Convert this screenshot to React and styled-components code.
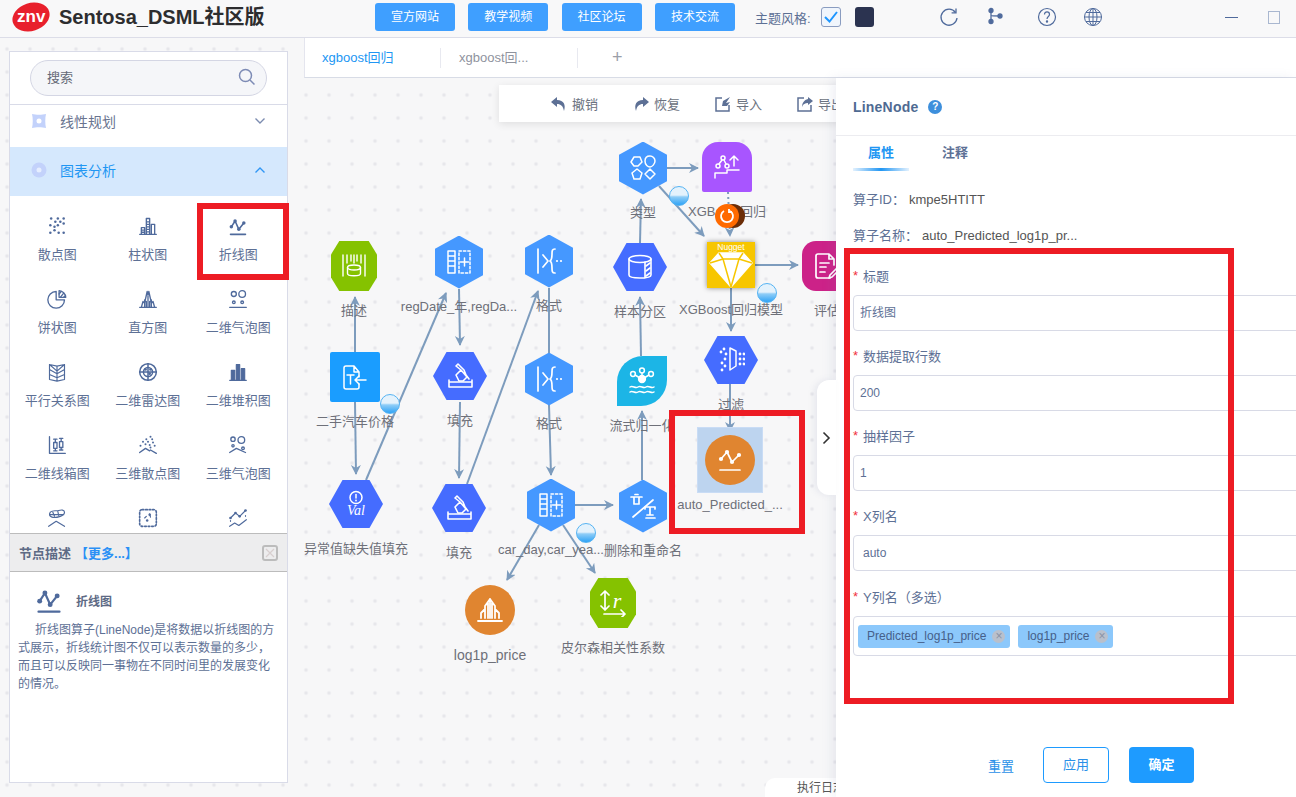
import React from 'react';
import styled, { createGlobalStyle } from 'styled-components';

const FONT = '"Liberation Sans", "Noto Sans CJK SC", sans-serif';
const OX = 304;
const OY = 78;

const GlobalStyle = createGlobalStyle`
    html, body { margin: 0; padding: 0; height: 100%; overflow: hidden; }
    body { font-family: ${FONT}; }
    * { box-sizing: border-box; }
`;

/* ---------- icon helpers ---------- */
const Svg = ({ size = 24, vb = 24, children, w = 1.4 }) => (
    <svg width={size} height={size} viewBox={`0 0 ${vb} ${vb}`} fill="none" stroke="currentColor" strokeWidth={w} strokeLinecap="round" strokeLinejoin="round">
        {children}
    </svg>
);
const Dots = ({ pts, r = 1.2 }) => pts.map(([x, y], i) => <circle key={i} cx={x} cy={y} r={r} fill="currentColor" stroke="none" />);

const LineChart = (p) => (
    <Svg {...p} w={1.9}>
        <path d="M3 22h18" />
        <path d="M4 13l4.500-7 4.500 10 6-7.500" />
        <Dots r={2.1} pts={[[4, 13], [8.5, 6], [13, 16], [19, 8.5]]} />
    </Svg>
);
const Scatter = (p) => <Svg {...p}><Dots r={1.5} pts={[[5, 3], [13, 3], [20, 3], [10, 7], [16, 7], [20, 9], [4, 11], [13, 11], [9, 13], [4, 20], [9, 17], [14, 20], [20, 20]]} /></Svg>;
const Bars = (p) => (
    <Svg {...p} w={1.6}>
        <path d="M2 22h20M4 22v-8h4v8M10 22V3h4v19M16 22V10h4v12M4 17h4M4 19.500h4M10 7h4M10 10h4M10 13h4M10 16h4M10 19h4" />
    </Svg>
);
const Pie = (p) => (
    <Svg {...p} w={1.6}>
        <path d="M11 3a10 10 0 1 0 10 10H11z" />
        <path d="M14.500 2a8.500 8.500 0 0 1 8 8h-8z" />
        <path d="M17 3l-2.500 3M20 5l-4 5M22 8l-2 2" w={1} />
    </Svg>
);
const Histogram = (p) => (
    <Svg {...p} w={1.6}>
        <path d="M2 22h20M4 22l2-7 2 2 1-5 2-9 1 4 1-4 2 9 1 5 2-2 2 7M8 22v-9M12 22V8M16 22v-9M10 22v-7M14 22v-7" />
    </Svg>
);
const Bubble = (p) => (
    <Svg {...p} w={1.6}>
        <path d="M2 22h20" />
        <circle cx="7" cy="6" r="3" />
        <circle cx="17" cy="6" r="4" />
        <circle cx="7" cy="16" r="1.600" />
        <circle cx="17" cy="16" r="1.600" />
    </Svg>
);
const Book = (p) => (
    <Svg {...p}>
        <path d="M3 3l9 2 9-2v18l-9 2-9-2zM12 5v18M3 9l9 5 9-5M3 15l9 4 9-4M3 3l9 8 9-8" />
    </Svg>
);
const Radar = (p) => (
    <Svg {...p} w={1.800}>
        <circle cx="12" cy="12" r="10" />
        <circle cx="12" cy="12" r="5.500" />
        <path d="M12 2v20M2 12h20" />
        <Dots r={1.600} pts={[[9, 9], [15, 9], [14, 14]]} />
    </Svg>
);
const Stacked = (p) => (
    <Svg {...p}>
        <path d="M2 22h20" />
        <path d="M4 10h4v12H4zM10 3h4v19h-4zM16 8h4v14h-4z" fill="currentColor" />
    </Svg>
);
const BoxPlot = (p) => (
    <Svg {...p} w={1.600}>
        <path d="M3 2v20h19M8 5h4M10 5v4M10 16v3M8 19h4M8 9h4v7H8zM15 4h4M17 4v4M17 15v3M15 18h4M15 8h4v7h-4z" />
    </Svg>
);
const Scatter3 = (p) => (
    <Svg {...p} w={1.600}>
        <path d="M2 21l7-5 5 3M15 18l7 4" />
        <Dots r={1.200} pts={[[15, 2], [10, 5], [17, 5], [6, 8], [12, 8], [18, 9], [9, 11], [14, 12], [20, 13], [3, 13], [15, 15]]} />
    </Svg>
);
const Bubble3 = (p) => (
    <Svg {...p} w={1.600}>
        <circle cx="6" cy="5" r="2.600" />
        <circle cx="16" cy="6" r="4" />
        <circle cx="6" cy="13" r="1.400" />
        <circle cx="18" cy="16" r="1.600" />
        <path d="M2 21l8-5 11 5" />
    </Svg>
);
const Cloud = (p) => (
    <Svg {...p}>
        <path d="M4 5c3-3 7-1 10-2s7-1 7 2-2 4-5 5-7 2-10 1-4-3-2-6zM7 5l2 5M13 4l1 5M4 8h16" />
        <path d="M2 22l9-6 10 6" />
    </Svg>
);
const DashedBox = (p) => (
    <Svg {...p}>
        <rect x="2" y="2" width="20" height="20" rx="3" strokeDasharray="2 2.200" strokeWidth="2" />
        <path d="M8 12l2-2M14 7l1 4" />
        <Dots r={1.500} pts={[[14, 8], [11, 15]]} />
    </Svg>
);
const Area = (p) => (
    <Svg {...p}>
        <path d="M3 12l6-6 5 4 7-7" />
        <path d="M2 22l6-4 5 3 9-7" />
        <Dots r={1.600} pts={[[3, 12], [9, 6], [14, 10], [21, 3]]} />
        <path d="M3 15v2M21 9v2" strokeDasharray="1 2" />
    </Svg>
);

/* white glyphs drawn inside canvas nodes */
const W = ({ children, size = 28, vb = 28, w = 1.5 }) => <Svg size={size} vb={vb} w={w}>{children}</Svg>;
const icons = {
    describe: (
        <W w={1.400}>
            <path d="M3 3v21M25 3v21M7 3v8M11 3v6M14 3v8M17 3v6M21 3v8" />
            <ellipse cx="14" cy="15.500" rx="6.500" ry="2.500" />
            <path d="M7.500 15.500v6c0 3 13 3 13 0v-6" />
        </W>
    ),
    table: (
        <W w={1.500}>
            <path d="M18 14V9l-5-6H5a2 2 0 0 0-2 2v19a2 2 0 0 0 2 2h11a2 2 0 0 0 2-2v-3M13 3v6h5" />
            <path d="M6 12h7M9.500 12v9M25 17H14M18 13l-4 4 4 4" />
        </W>
    ),
    columns: (
        <W w={1.500}>
            <path d="M3 3h7v22H3zM3 8h7M3 13h7M3 18h7" />
            <path d="M14 3h11v22H14z" strokeDasharray="2.400 2" />
            <path d="M19.500 10v8M15.500 14h8" />
        </W>
    ),
    format: (
        <W w={1.700}>
            <path d="M3 2v24M8 8l5 6-5 6" />
            <path d="M20 2c-3 0-3 2-3 5s0 6-2 7c2 1 2 4 2 7s0 5 3 5" />
            <Dots r={1.100} pts={[[22, 14], [26, 14]]} />
        </W>
    ),
    fill: (
        <W w={1.600}>
            <path d="M3 20h23v5H3zM3 20v-2M26 20v-2" />
            <path d="M10 13l5-5 6 7-4 4h-4zM10 4l5 4M10 4l2-2 6 6 2 5 3 4" />
        </W>
    ),
    val: (
        <W w={1.500}>
            <circle cx="14" cy="7.500" r="6" />
            <path d="M14 4.500v3.500" />
            <Dots r={0.900} pts={[[14, 10.500]]} />
            <text x="14" y="25" textAnchor="middle" fill="currentColor" stroke="none" fontFamily='"Liberation Serif", serif' fontStyle="italic" fontSize="14">Val</text>
        </W>
    ),
    cylinder: (
        <W w={1.600}>
            <ellipse cx="14" cy="6" rx="11" ry="3.500" />
            <path d="M3 6v16c0 4 22 4 22 0V6M19 9v16" />
            <path d="M20 13l4-3M20 18l4-3M20 23l4-3" />
        </W>
    ),
    types: (
        <W w={1.500}>
            <path d="M5 3h6l2 5-4 4H5L2 8zM21 2a5 5 0 0 1 5 5c0 3-3 6-5 6s-5-2-5-6 2-5 5-5zM8 15l5 4-2 6H5l-2-6zM21 15l5 5-5 5-5-5z" />
        </W>
    ),
    xgb: (
        <W w={1.500}>
            <circle cx="10" cy="5" r="2" />
            <circle cx="5" cy="13" r="2" />
            <circle cx="14" cy="13" r="2" />
            <path d="M9 7l-3 4M11 7l2 4M21 13V3M17 7l4-4 4 4M2 25v-5h12v-3h12" />
        </W>
    ),
    nugget: (
        <svg width="48" height="46" viewBox="0 0 48 46" fill="none" stroke="#fff" strokeWidth="1.500" strokeLinejoin="round">
            <text x="24" y="8" textAnchor="middle" fontSize="8.500" fill="#fff" stroke="none" fontFamily={FONT}>Nugget</text>
            <path d="M12 11h24l9 10-21 24L3 21z" fill="#fff" />
            <path d="M12 11l4 6h16l4-6M3 21l13-4 8 28 8-28 13 4M16 17h16" stroke="#f7c600" />
        </svg>
    ),
    evaluate: (
        <W w={1.700}>
            <path d="M21 13V7l-5-5H5a2 2 0 0 0-2 2v20a2 2 0 0 0 2 2h12M16 2v5h5M7 11h9M7 15h6M7 20h5" />
            <path d="M17 23l8-8 2 2-8 8-3 1z" />
        </W>
    ),
    filter: (
        <W w={1.500}>
            <path d="M13 2l6 3v15l-6 4z" />
            <Dots r={1.400} pts={[[7, 3], [4, 6], [9, 8], [8, 13], [5, 17], [8, 20], [5, 24], [23, 8], [27, 8], [23, 13], [27, 13], [23, 18], [27, 18]]} />
        </W>
    ),
    stream: (
        <W w={1.500}>
            <circle cx="14" cy="12" r="3.400" fill="currentColor" />
            <circle cx="5" cy="7" r="2.400" />
            <circle cx="14" cy="3.500" r="2.400" />
            <circle cx="23" cy="7" r="2.400" />
            <path d="M7 8l5 3M14 6v3M21 8l-5 3M2 20c3-2 5 2 8 0s5 2 8 0 5 2 8 0M2 25c3-2 5 2 8 0s5 2 8 0 5 2 8 0" />
        </W>
    ),
    rename: (
        <W w={1.700}>
            <path d="M2 5h11M5 5v7h5V5M6 2.500h3M4 25L24 8" />
            <path d="M16 15h10M16 15v2M26 15v2M21 15v8M18 23h6M17 26h9" />
        </W>
    ),
    hist: (
        <W w={1.800}>
            <path d="M2 25h24" />
            <path d="M5 22v-5M9 22V10M12 22V7M14 22V3M16 22V7M19 22V10M23 22v-5M5 17l4-4M23 17l-4-4M9 10l5-7 5 7" />
        </W>
    ),
    line: (
        <W w={1.700}>
            <path d="M4 24h20" />
            <path d="M5 13l6-7 5 10 7-7" />
            <Dots r={2.100} pts={[[5, 13], [11, 6], [16, 16], [23, 9]]} />
        </W>
    ),
    pearson: (
        <W w={1.700}>
            <path d="M5 25h21M22 21l4 4-4 4M6 2v19M2 6l4-4 4 4M2 17l4 4 4-4" />
            <text x="18" y="19" textAnchor="middle" fill="currentColor" stroke="none" fontFamily='"Liberation Serif", serif' fontStyle="italic" fontSize="22">r</text>
        </W>
    ),
};

/* ---------- data ---------- */
const chartItems = [
    ['散点图', Scatter], ['柱状图', Bars], ['折线图', LineChart],
    ['饼状图', Pie], ['直方图', Histogram], ['二维气泡图', Bubble],
    ['平行关系图', Book], ['二维雷达图', Radar], ['二维堆积图', Stacked],
    ['二维线箱图', BoxPlot], ['三维散点图', Scatter3], ['三维气泡图', Bubble3],
    ['', Cloud], ['', DashedBox], ['', Area],
];

const nodes = [
    { x: 354, y: 266, shape: 'octagon', color: '#85c200', icon: 'describe', label: '描述' },
    { x: 459, y: 262, shape: 'hex', color: '#4598ff', icon: 'columns', label: 'regDate_年,regDa...' },
    { x: 549, y: 261, shape: 'hex', color: '#4598ff', icon: 'format', label: '格式' },
    { x: 355, y: 377, shape: 'square', color: '#1a9dff', icon: 'table', label: '二手汽车价格' },
    { x: 460, y: 376, shape: 'flat', color: '#456cff', icon: 'fill', label: '填充' },
    { x: 549, y: 379, shape: 'hex', color: '#4598ff', icon: 'format', label: '格式' },
    { x: 356, y: 504, shape: 'flat', color: '#456cff', icon: 'val', label: '异常值缺失值填充' },
    { x: 459, y: 508, shape: 'flat', color: '#456cff', icon: 'fill', label: '填充' },
    { x: 551, y: 505, shape: 'hex', color: '#4598ff', icon: 'columns', label: 'car_day,car_yea...' },
    { x: 490, y: 610, shape: 'circle', color: '#e08530', icon: 'hist', label: 'log1p_price', big: true },
    { x: 613, y: 603, shape: 'octagon', color: '#85c200', icon: 'pearson', label: '皮尔森相关性系数' },
    { x: 643, y: 506, shape: 'hex', color: '#4598ff', icon: 'rename', label: '删除和重命名' },
    { x: 642, y: 381, shape: 'leaf', color: '#1cb5e6', icon: 'stream', label: '流式归一化' },
    { x: 640, y: 267, shape: 'flat', color: '#456cff', icon: 'cylinder', label: '样本分区' },
    { x: 643, y: 168, shape: 'hex', color: '#4598ff', icon: 'types', label: '类型' },
    { x: 727, y: 167, shape: 'top', color: '#a855ff', icon: 'xgb', label: 'XGBoost回归' },
    { x: 731, y: 265, shape: 'nugget', color: '#f7c600', icon: 'nugget', label: 'XGBoost回归模型' },
    { x: 827, y: 266, shape: 'rounded', color: '#cc2288', icon: 'evaluate', label: '评估' },
    { x: 731, y: 360, shape: 'flat', color: '#456cff', icon: 'filter', label: '过滤' },
    { x: 730, y: 460, shape: 'circle', color: '#e08530', icon: 'line', label: 'auto_Predicted_...', selected: true },
];

const edges = [
    [355, 352, 355, 297], [355, 402, 356, 474], [366, 480, 446, 293], [459, 289, 460, 345],
    [460, 402, 459, 478], [467, 484, 538, 291], [549, 288, 549, 353, 1], [549, 405, 551, 475],
    [539, 525, 507, 580], [563, 525, 595, 573], [575, 505, 613, 505], [642, 480, 642, 411],
    [641, 356, 640, 297], [640, 243, 641, 199], [667, 168, 698, 168], [659, 186, 704, 236],
    [755, 265, 798, 265], [731, 288, 731, 331], [730, 384, 730, 431],
];

const bubbles = [[390, 404], [679, 196], [767, 293], [586, 533]];

const fields = [
    ['标题', '折线图'],
    ['数据提取行数', '200'],
    ['抽样因子', '1'],
    ['X列名', 'auto', true],
];

/* ---------- app ---------- */
const App = () => (
    <Page>
        <GlobalStyle />
        <Header>
            <Brand>
                <Logo><LogoText>znv</LogoText></Logo>
                <Title>Sentosa_DSML社区版</Title>
            </Brand>
            <LinkRow>
                {['宣方网站', '教学视频', '社区论坛', '技术交流'].map((t) => <LinkButton key={t}>{t}</LinkButton>)}
            </LinkRow>
            <ThemeRow>
                主题风格:
                <ThemeCheck>
                    <svg width="16" height="14" viewBox="0 0 16 14" fill="none" stroke="#1e96ff" strokeWidth="2"><path d="M2 7l4.500 4.500L14 2" /></svg>
                </ThemeCheck>
                <ThemeDark />
            </ThemeRow>
            <HeaderIcons>
                <HeaderIcon $left={939}>
                    <svg width="20" height="20" viewBox="0 0 20 20" fill="none" stroke="currentColor" strokeWidth="1.300"><path d="M16.500 5.500A8 8 0 1 0 18 11" /><path d="M17 1.500v4.400h-4.400" /></svg>
                </HeaderIcon>
                <HeaderIcon $left={986}>
                    <svg width="18" height="18" viewBox="0 0 18 18" fill="currentColor" stroke="currentColor" strokeWidth="1.300"><circle cx="5" cy="3.500" r="2" /><circle cx="5" cy="14.500" r="2" /><circle cx="14" cy="9" r="2" /><path d="M5 3.500v11M5 8c0 1 2 1 9 1" fill="none" /></svg>
                </HeaderIcon>
                <HeaderIcon $left={1037}>
                    <svg width="20" height="20" viewBox="0 0 20 20" fill="none" stroke="currentColor" strokeWidth="1.200"><circle cx="10" cy="10" r="8.500" /><path d="M7.500 7.500c0-3.500 5-3.500 5 0 0 2-2.500 2-2.500 4.500" /><circle cx="10" cy="14.500" r=".6" fill="currentColor" /></svg>
                </HeaderIcon>
                <HeaderIcon $left={1083}>
                    <svg width="20" height="20" viewBox="0 0 20 20" fill="none" stroke="currentColor" strokeWidth="1"><circle cx="10" cy="10" r="8.500" /><ellipse cx="10" cy="10" rx="4" ry="8.500" /><path d="M10 1.500v17M1.500 10h17M3 5.500h14M3 14.500h14" /></svg>
                </HeaderIcon>
                <MinimizeBar />
                <MaximizeBox />
            </HeaderIcons>
        </Header>
        <Content>
            <SideColumn>
                <Sidebar>
                    <SearchArea>
                        <SearchBox>
                            搜索
                            <svg width="18" height="18" viewBox="0 0 18 18" fill="none" stroke="#7d8bb5" strokeWidth="1.500"><circle cx="7.500" cy="7.500" r="6" /><path d="M12 12l4.500 4.500" /></svg>
                        </SearchBox>
                    </SearchArea>
                    <Accordion>
                        <AccordionIcon>
                            <svg width="16" height="16" viewBox="0 0 16 16"><path d="M1 1c4 1 10 1 14 0-1 4-1 10 0 14-4-1-10-1-14 0 1-4 1-10 0-14z" fill="#c3d2fb" /><circle cx="8" cy="8" r="2.500" fill="#fff" /></svg>
                        </AccordionIcon>
                        线性规划
                        <Chevron><svg width="12" height="8" viewBox="0 0 12 8" fill="none" stroke="#7c8cb0" strokeWidth="1.400"><path d="M1.500 1.500L6 6l4.500-4.500" /></svg></Chevron>
                    </Accordion>
                    <Accordion $active>
                        <AccordionIcon>
                            <svg width="16" height="16" viewBox="0 0 16 16"><circle cx="8" cy="8" r="7.500" fill="#c3d2fb" /><circle cx="8" cy="8" r="2.500" fill="#e6eeff" /></svg>
                        </AccordionIcon>
                        图表分析
                        <Chevron><svg width="12" height="8" viewBox="0 0 12 8" fill="none" stroke="#2f96f5" strokeWidth="1.400"><path d="M1.500 6.500L6 2l4.500 4.500" /></svg></Chevron>
                    </Accordion>
                    <ChartGrid>
                        {chartItems.map(([label, Icon], i) => (
                            <ChartCell key={i}>
                                <IconSlot><Icon size={20} /></IconSlot>
                                <ChartLabel>{label}</ChartLabel>
                            </ChartCell>
                        ))}
                    </ChartGrid>
                    <Description>
                        <DescriptionHead>
                            <DescriptionTitle>节点描述</DescriptionTitle>
                            <MoreLink>【更多...】</MoreLink>
                            <CloseBox>
                                <svg width="10" height="10" viewBox="0 0 10 10" stroke="#d8cfcf" strokeWidth="1.200"><path d="M1 1l8 8M9 1l-8 8" /></svg>
                            </CloseBox>
                        </DescriptionHead>
                        <DescriptionBody>
                            <DescriptionLead>
                                <LeadIcon><LineChart size={28} /></LeadIcon>
                                <LeadName>折线图</LeadName>
                            </DescriptionLead>
                            <DescriptionText>
                                折线图算子(LineNode)是将数据以折线图的方式展示，折线统计图不仅可以表示数量的多少，而且可以反映同一事物在不同时间里的发展变化的情况。
                            </DescriptionText>
                        </DescriptionBody>
                    </Description>
                    <RedBox $left={187} $top={151} $width={92} $height={77} />
                </Sidebar>
            </SideColumn>
            <Main>
                <TabBar>
                    <CanvasTab $active>xgboost回归</CanvasTab>
                    <CanvasTab>xgboost回...</CanvasTab>
                    <AddTab>+</AddTab>
                </TabBar>
                <Canvas>
                    <EdgeLayer width="992" height="719" viewBox={`${OX} ${OY} 992 719`}>
                        <defs>
                            <marker id="arrow" markerWidth="12" markerHeight="12" refX="9" refY="5" orient="auto" markerUnits="userSpaceOnUse">
                                <path d="M0 0L10 5L0 10L3 5z" fill="#7d9cbd" />
                            </marker>
                        </defs>
                        {edges.map(([a, b, c, d, plain], i) => (
                            <line key={i} x1={a} y1={b} x2={c} y2={d} stroke="#7d9cbd" strokeWidth="2" markerEnd={plain ? undefined : 'url(#arrow)'} />
                        ))}
                        <line x1="728" y1="192" x2="730" y2="236" stroke="#7d9cbd" strokeWidth="2" strokeDasharray="2 3" markerEnd="url(#arrow)" />
                    </EdgeLayer>
                    {nodes.map((n) => (
                        <Node key={n.label + n.x} style={{ left: n.x - 70 - OX, top: n.y - 27 - OY }}>
                            <ShapeSlot>
                                {n.selected && <Selection />}
                                <Shape $kind={n.shape} $color={n.color}>{icons[n.icon]}</Shape>
                            </ShapeSlot>
                            <NodeLabel $big={n.big}>{n.label}</NodeLabel>
                        </Node>
                    ))}
                    {bubbles.map(([x, y]) => <WaterBubble key={x} style={{ left: x - 10 - OX, top: y - 10 - OY }} />)}
                    <Spinner>
                        <svg width="16" height="16" viewBox="0 0 16 16" fill="none" stroke="#fff" strokeWidth="1.800"><path d="M11 3a6 6 0 1 1-6 0" /><path d="M10 1v3h3" /></svg>
                    </Spinner>
                    <Toolbar>
                        <ToolItem>
                            <svg width="16" height="16" viewBox="0 0 16 16" fill="#5d7095"><path d="M6 1L0 6l6 5V8c4 0 6 2 7 7 2-6 0-11-7-11z" /></svg>
                            撤销
                        </ToolItem>
                        <ToolItem>
                            <svg width="16" height="16" viewBox="0 0 16 16" fill="#5d7095"><path d="M10 1l6 5-6 5V8C6 8 4 10 3 15 1 9 3 4 10 4z" /></svg>
                            恢复
                        </ToolItem>
                        <ToolItem>
                            <svg width="16" height="16" viewBox="0 0 16 16" fill="none" stroke="#5d7095" strokeWidth="1.500"><path d="M7 2H1v13h13V9" /><path d="M15 1L8 5l-1 5h5l3-4-4 1z" fill="#5d7095" stroke="none" /></svg>
                            导入
                        </ToolItem>
                        <ToolItem>
                            <svg width="16" height="16" viewBox="0 0 16 16" fill="none" stroke="#5d7095" strokeWidth="1.500"><path d="M7 2H1v13h13V9" /><path d="M11 1l5 4-5 4V7C8 7 6 8 5 11c0-4 2-7 6-8z" fill="#5d7095" stroke="none" /></svg>
                            导出
                        </ToolItem>
                    </Toolbar>
                    <RedBox $left={365} $top={332} $width={136} $height={124} />
                    <LogTab>执行日志</LogTab>
                    <Panel>
                        <CollapseHandle>
                            <svg width="9" height="14" viewBox="0 0 9 14" fill="none" stroke="#333" strokeWidth="1.600"><path d="M1.500 1.500L7 7l-5.500 5.500" /></svg>
                        </CollapseHandle>
                        <PanelHead>
                            LineNode
                            <HelpDot>?</HelpDot>
                        </PanelHead>
                        <PanelTabs>
                            <PanelTab $active>属性</PanelTab>
                            <PanelTab>注释</PanelTab>
                        </PanelTabs>
                        <InfoRow>算子ID：<InfoValue>kmpe5HTITT</InfoValue></InfoRow>
                        <InfoRow>算子名称：<InfoValue>auto_Predicted_log1p_pr...</InfoValue></InfoRow>
                        <Form>
                            {fields.map(([label, value, select]) => (
                                <Field key={label}>
                                    <FieldLabel><Star>*</Star>{label}</FieldLabel>
                                    <FieldInput $select={select}>{value}</FieldInput>
                                </Field>
                            ))}
                            <Field>
                                <FieldLabel><Star>*</Star>Y列名（多选）</FieldLabel>
                                <MultiInput>
                                    <Tag>Predicted_log1p_price<TagClose>×</TagClose></Tag>
                                    <Tag>log1p_price<TagClose>×</TagClose></Tag>
                                </MultiInput>
                            </Field>
                        </Form>
                        <RedBox $left={8} $top={170} $width={390} $height={456} />
                        <PanelFooter>
                            <TextButton>重置</TextButton>
                            <OutlineButton>应用</OutlineButton>
                            <SolidButton>确定</SolidButton>
                        </PanelFooter>
                    </Panel>
                </Canvas>
            </Main>
        </Content>
    </Page>
);

/* ---------- styles ---------- */
const Page = styled.div`
    width: 1296px;
    height: 797px;
    overflow: hidden;
    display: flex;
    flex-direction: column;
    background-color: #f7f7f8;
    background-image: radial-gradient(circle, #e7e7eb 1.600px, transparent 2.100px);
    background-size: 23px 23px;
    background-position: -4.500px -8.500px;
`;

const Header = styled.header`
    flex: 0 0 38px;
    position: relative;
    display: flex;
    align-items: flex-start;
    background: #f8f8f9;
    border-bottom: 1px solid #dcdde8;
`;

const Brand = styled.div`
    width: 375px;
    display: flex;
    align-items: center;
    padding: 3px 0 0 12px;
`;

const Logo = styled.div`
    width: 38px;
    height: 28px;
    border-radius: 50%;
    background: #e8202c;
    transform: rotate(-18deg);
    display: flex;
    align-items: center;
    justify-content: center;
`;

const LogoText = styled.span`
    color: #fff;
    font-size: 17px;
    font-weight: 700;
    transform: rotate(18deg);
`;

const Title = styled.div`
    margin-left: 9px;
    font-size: 20px;
    font-weight: 700;
    color: #2d2d2f;
    line-height: 28px;
    white-space: nowrap;
`;

const LinkRow = styled.div`
    display: flex;
    gap: 13.300px;
    padding-top: 3px;
`;

const LinkButton = styled.div`
    width: 80px;
    height: 28px;
    line-height: 28px;
    text-align: center;
    border-radius: 3px;
    background: #3f9fff;
    color: #fff;
    font-size: 12px;
`;

const ThemeRow = styled.div`
    margin-left: 20px;
    height: 34px;
    display: flex;
    align-items: center;
    font-size: 13px;
    color: #5d7095;
    white-space: nowrap;
`;

const ThemeCheck = styled.div`
    width: 20px;
    height: 20px;
    margin-left: 10px;
    border: 1px solid #8a9cc0;
    border-radius: 3px;
    background: #f0f5fc;
    display: flex;
    align-items: center;
    justify-content: center;
`;

const ThemeDark = styled.div`
    width: 19px;
    height: 20px;
    margin-left: 14px;
    border-radius: 3px;
    background: #2b3350;
`;

const HeaderIcons = styled.div`
    flex: 1;
    display: flex;
    align-items: center;
    height: 34px;
    color: #4f6a9c;
`;

const HeaderIcon = styled.div`
    position: absolute;
    left: ${(p) => p.$left}px;
    top: 7px;
    line-height: 0;
`;

const MinimizeBar = styled.div`
    position: absolute;
    left: 1225px;
    top: 17px;
    width: 13px;
    height: 1px;
    background: #4f6a9c;
`;

const MaximizeBox = styled.div`
    position: absolute;
    left: 1268px;
    top: 11px;
    width: 12px;
    height: 13px;
    border: 1px solid #a9b7d0;
`;

const Content = styled.div`
    flex: 1;
    display: flex;
    min-height: 0;
`;

const SideColumn = styled.div`
    flex: 0 0 304px;
    padding: 13px 16px 14px 9px;
`;

const Sidebar = styled.aside`
    position: relative;
    height: 100%;
    display: flex;
    flex-direction: column;
    background: #fff;
    border: 1px solid #d9dbe8;
`;

const SearchArea = styled.div`
    flex: 0 0 53px;
    padding: 8px 20px 0;
    border-bottom: 1px solid #d9dbe8;
`;

const SearchBox = styled.div`
    height: 36px;
    border: 1px solid #d4d6e4;
    border-radius: 18px;
    background: #f5f6f9;
    padding: 0 10px 3px 16px;
    display: flex;
    align-items: center;
    justify-content: space-between;
    font-size: 13px;
    color: #666a77;
`;

const Accordion = styled.div`
    flex: 0 0 ${(p) => (p.$active ? 49 : 42)}px;
    display: flex;
    align-items: center;
    padding: 0 21px ${(p) => (p.$active ? 4 : 10)}px;
    font-size: 14px;
    color: ${(p) => (p.$active ? '#2196f3' : '#69748f')};
    background: ${(p) => (p.$active ? '#d5e8fd' : '#fff')};
`;

const AccordionIcon = styled.span`
    width: 29px;
    line-height: 0;
`;

const Chevron = styled.span`
    margin-left: auto;
    line-height: 0;
`;

const ChartGrid = styled.div`
    flex: 1;
    min-height: 0;
    overflow: hidden;
    display: grid;
    grid-template-columns: repeat(3, 90.500px);
    grid-auto-rows: 73px;
    padding: 20px 0 0 2px;
`;

const ChartCell = styled.div`
    display: flex;
    flex-direction: column;
    align-items: center;
    color: #4f6a9c;
`;

const IconSlot = styled.div`
    height: 22px;
    line-height: 0;
`;

const ChartLabel = styled.div`
    margin-top: 8px;
    line-height: 18px;
    font-size: 13px;
    color: #5d7095;
    white-space: nowrap;
`;

const Description = styled.section`
    flex: 0 0 249px;
    display: flex;
    flex-direction: column;
    background: #fff;
`;

const DescriptionHead = styled.div`
    flex: 0 0 39px;
    display: flex;
    align-items: center;
    padding: 0 9px;
    background: #ededee;
    border-top: 1px solid #bcbcbc;
    border-bottom: 1px solid #bcbcbc;
`;

const DescriptionTitle = styled.span`
    font-size: 13px;
    font-weight: 700;
    color: #5d6a85;
`;

const MoreLink = styled.span`
    margin-left: 4px;
    font-size: 13px;
    font-weight: 700;
    color: #2a90f5;
`;

const CloseBox = styled.span`
    margin-left: auto;
    width: 16px;
    height: 16px;
    border: 2px solid #bcbcbc;
    border-radius: 3px;
    display: flex;
    align-items: center;
    justify-content: center;
`;

const DescriptionBody = styled.div`
    padding: 14px 9px 0 8px;
`;

const DescriptionLead = styled.div`
    display: flex;
    align-items: center;
    padding-left: 17px;
`;

const LeadIcon = styled.span`
    line-height: 0;
    color: #4f6a9c;
`;

const LeadName = styled.span`
    margin-left: 13px;
    font-size: 12px;
    font-weight: 700;
    color: #5d6a85;
`;

const DescriptionText = styled.p`
    margin: 7px 0 0;
    font-size: 12px;
    line-height: 18px;
    text-indent: 17px;
    color: #5d7095;
`;

const RedBox = styled.div`
    position: absolute;
    left: ${(p) => p.$left}px;
    top: ${(p) => p.$top}px;
    width: ${(p) => p.$width}px;
    height: ${(p) => p.$height}px;
    border: 6px solid #ed1c24;
    pointer-events: none;
    z-index: 4;
`;

const Main = styled.main`
    flex: 1;
    display: flex;
    flex-direction: column;
    min-width: 0;
`;

const TabBar = styled.div`
    flex: 0 0 40px;
    display: flex;
    align-items: center;
    background: #fff;
    border-left: 1px solid #e4e5ee;
    border-bottom: 1px solid #d8dce6;
`;

const CanvasTab = styled.div`
    width: ${(p) => (p.$active ? 136 : 137)}px;
    height: 20px;
    line-height: 20px;
    padding-left: ${(p) => (p.$active ? 17 : 18)}px;
    font-size: 13px;
    color: ${(p) => (p.$active ? '#2196f3' : '#8f939e')};
    border-right: 1px solid #e8e9f0;
`;

const AddTab = styled.div`
    margin-left: 34px;
    font-size: 18px;
    color: #9a9ea8;
`;

const Canvas = styled.div`
    flex: 1;
    position: relative;
`;

const EdgeLayer = styled.svg`
    position: absolute;
    left: 0;
    top: 0;
`;

const Node = styled.div`
    position: absolute;
    width: 140px;
    display: flex;
    flex-direction: column;
    align-items: center;
`;

const ShapeSlot = styled.div`
    position: relative;
    height: 54px;
    width: 100%;
    display: flex;
    align-items: center;
    justify-content: center;
`;

const clips = {
    hex: 'polygon(50% 0, 100% 25%, 100% 75%, 50% 100%, 0 75%, 0 25%)',
    flat: 'polygon(25% 0, 75% 0, 100% 50%, 75% 100%, 25% 100%, 0 50%)',
    octagon: 'polygon(18% 0, 82% 0, 100% 27%, 100% 73%, 82% 100%, 18% 100%, 0 73%, 0 27%)',
};

const sizes = {
    hex: [48, 53],
    flat: [54, 48],
    octagon: [46, 50],
    nugget: [48, 46],
};

const radii = {
    circle: '50%',
    square: '2px',
    top: '16px 16px 2px 2px',
    rounded: '14px 2px 2px 14px',
    leaf: '26px 0 26px 0',
    nugget: '0',
};

const Shape = styled.div`
    position: relative;
    width: ${(p) => (sizes[p.$kind] || [50, 50])[0]}px;
    height: ${(p) => (sizes[p.$kind] || [50, 50])[1]}px;
    background: ${(p) => p.$color};
    color: #fff;
    clip-path: ${(p) => clips[p.$kind] || 'none'};
    border-radius: ${(p) => radii[p.$kind] || '0'};
    box-shadow: ${(p) => (p.$kind === 'nugget' ? '0 0 5px rgba(0, 0, 0, 0.45)' : 'none')};
    display: flex;
    align-items: center;
    justify-content: center;
    overflow: ${(p) => (p.$kind === 'nugget' ? 'hidden' : 'visible')};

    svg {
        display: block;
    }
`;

const Selection = styled.div`
    position: absolute;
    left: 37px;
    top: -6px;
    width: 66px;
    height: 66px;
    background: #bdd4ef;
    border: 1px solid #c9dcf5;
`;

const NodeLabel = styled.div`
    margin-top: 8px;
    line-height: 20px;
    font-size: ${(p) => (p.$big ? 14 : 13)}px;
    color: #6e7079;
    white-space: nowrap;
`;

const WaterBubble = styled.div`
    position: absolute;
    width: 20px;
    height: 20px;
    border-radius: 50%;
    border: 1px solid #55b3f3;
    background: linear-gradient(#e4f2fc 0, #e4f2fc 45%, #8fcdf7 55%, #2fa3f6 100%);
`;

const Spinner = styled.div`
    position: absolute;
    left: ${715 - OX}px;
    top: ${204 - OY}px;
    width: 24px;
    height: 24px;
    border-radius: 50%;
    background: #ff6a00;
    box-shadow: 6px 0 0 #6b2d08;
    display: flex;
    align-items: center;
    justify-content: center;
`;

const Toolbar = styled.div`
    position: absolute;
    left: ${499 - OX}px;
    top: ${85 - OY}px;
    width: 360px;
    height: 37px;
    padding-left: 52px;
    display: flex;
    align-items: center;
    background: #fff;
    box-shadow: 0 2px 8px rgba(0, 0, 0, 0.1);
`;

const ToolItem = styled.div`
    flex: 0 0 82px;
    display: flex;
    align-items: center;
    gap: 5px;
    font-size: 13px;
    color: #6b7280;
    white-space: nowrap;
`;

const LogTab = styled.div`
    position: absolute;
    left: ${765 - OX}px;
    top: ${778 - OY}px;
    width: 100px;
    height: 19px;
    padding-left: 32px;
    background: #fff;
    border-top-left-radius: 10px;
    font-size: 12px;
    line-height: 20px;
    color: #555;
    white-space: nowrap;
`;

const Panel = styled.div`
    position: absolute;
    left: ${836 - OX}px;
    top: 0;
    right: 0;
    bottom: 0;
    display: flex;
    flex-direction: column;
    background: #fff;
    box-shadow: -4px 0 10px rgba(120, 130, 170, 0.12);
    z-index: 2;
`;

const CollapseHandle = styled.div`
    position: absolute;
    left: -19px;
    top: 302px;
    width: 19px;
    height: 115px;
    display: flex;
    align-items: center;
    justify-content: center;
    background: #fff;
    border-radius: 12px 0 0 12px;
    box-shadow: -3px 0 6px rgba(120, 130, 170, 0.12);
`;

const PanelHead = styled.div`
    flex: 0 0 58px;
    display: flex;
    align-items: center;
    gap: 10px;
    padding: 0 0 0 17px;
    font-size: 14px;
    font-weight: 700;
    letter-spacing: 0.2px;
    color: #4f6a92;
    border-bottom: 1px solid #ececf0;
`;

const HelpDot = styled.span`
    width: 14px;
    height: 14px;
    border-radius: 50%;
    background: #3d8fdc;
    color: #fff;
    font-size: 10px;
    line-height: 14px;
    text-align: center;
`;

const PanelTabs = styled.div`
    flex: 0 0 35px;
    display: flex;
    gap: 18px;
    padding-left: 17px;
    margin-bottom: 2px;
`;

const PanelTab = styled.div`
    position: relative;
    width: 56px;
    line-height: 33px;
    text-align: center;
    font-size: 13px;
    font-weight: 700;
    color: ${(p) => (p.$active ? '#2196f3' : '#5d7095')};

    &::after {
        content: '';
        position: absolute;
        left: 0;
        right: 0;
        bottom: 0;
        height: 3px;
        background: ${(p) => (p.$active ? 'linear-gradient(90deg, #e3f1fe, #2196f3 50%, #e3f1fe)' : 'none')};
    }
`;

const InfoRow = styled.div`
    flex: 0 0 36px;
    padding: 18px 0 0 17px;
    line-height: 18px;
    font-size: 13px;
    color: #5d7095;
    white-space: nowrap;
`;

const InfoValue = styled.span`
    margin-left: 4px;
    font-size: 13px;
    color: #555;
`;

const Form = styled.div`
    margin-top: 20px;
    padding-left: 17px;
    display: flex;
    flex-direction: column;
    gap: 14px;
    margin-right: -60px;
`;

const Field = styled.div`
    display: flex;
    flex-direction: column;

    &:last-child {
        margin-top: 1px;
    }
`;

const FieldLabel = styled.div`
    display: flex;
    align-items: center;
    height: 20px;
    margin-bottom: 10px;
    font-size: 13px;
    color: #5d7095;
`;

const Star = styled.span`
    width: 10px;
    color: #f03040;
    font-size: 13px;
`;

const FieldInput = styled.div`
    height: 36px;
    line-height: 34px;
    padding-left: ${(p) => (p.$select ? 9 : 6)}px;
    border: 1px solid #d8dae6;
    border-radius: 4px;
    font-size: 12px;
    color: #5d7095;
`;

const MultiInput = styled.div`
    height: 40px;
    display: flex;
    align-items: center;
    gap: 8px;
    padding-left: 4px;
    border: 1px solid #d8dae6;
    border-radius: 4px;
`;

const Tag = styled.span`
    height: 23px;
    display: flex;
    align-items: center;
    gap: 6px;
    padding: 0 5px 0 9px;
    border-radius: 3px;
    background: #8cc8fb;
    font-size: 12px;
    color: #46608a;
    white-space: nowrap;
`;

const TagClose = styled.span`
    width: 13px;
    height: 13px;
    border-radius: 50%;
    background: #b9c0cc;
    color: #8a93a5;
    font-size: 12px;
    line-height: 13px;
    text-align: center;
`;

const PanelFooter = styled.div`
    margin-top: auto;
    padding: 0 102px 14px 0;
    display: flex;
    justify-content: flex-end;
    align-items: center;
    gap: 20px;
`;

const TextButton = styled.div`
    margin-right: 9px;
    font-size: 13px;
    color: #2a90e8;
`;

const OutlineButton = styled.div`
    width: 66px;
    height: 36px;
    line-height: 34px;
    text-align: center;
    border: 1px solid #1e9bff;
    border-radius: 4px;
    font-size: 13px;
    color: #2a90e8;
`;

const SolidButton = styled.div`
    width: 65px;
    height: 36px;
    line-height: 36px;
    text-align: center;
    border-radius: 4px;
    background: #1e9bff;
    font-size: 13px;
    font-weight: 700;
    color: #fff;
`;

export default App;
